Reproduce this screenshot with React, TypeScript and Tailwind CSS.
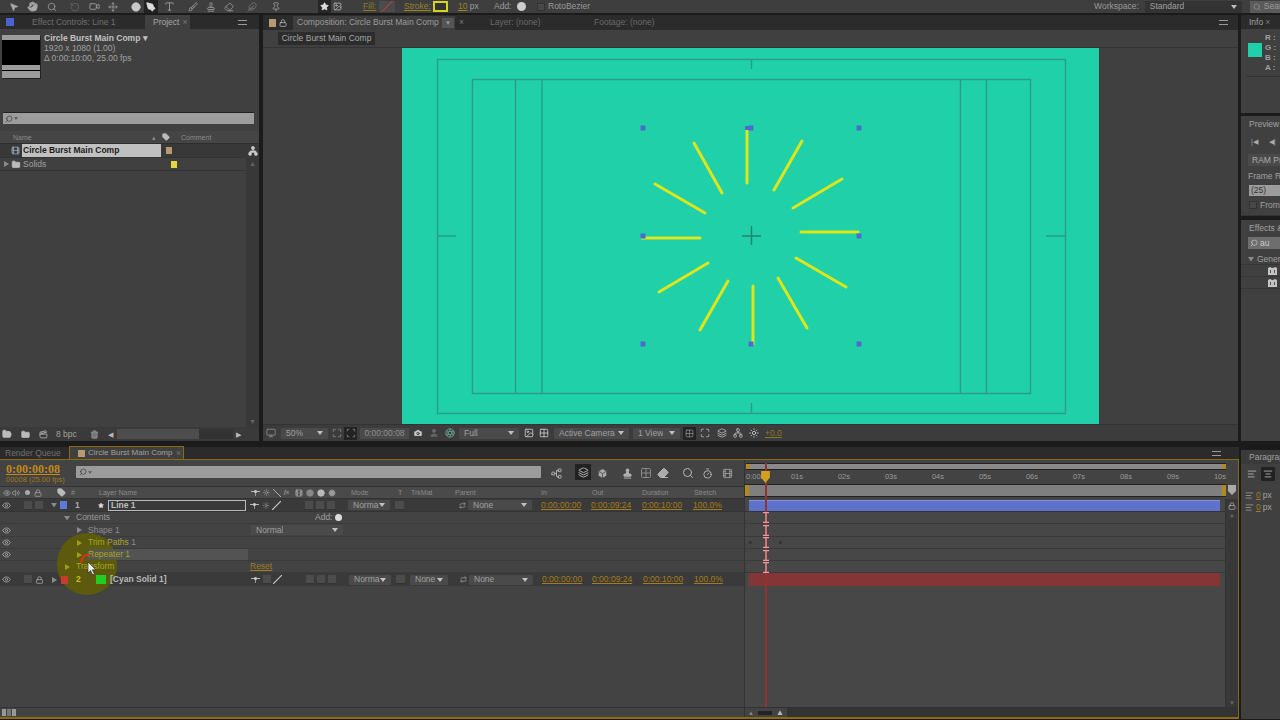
import {
  MousePointer2, Hand, Search, RotateCcw, Video, Move, Circle, PenTool, Type, Brush, Stamp, Eraser, Feather, Pin, Star,
  Image, Eye, Volume2, Lock, Tag, Sun, Folder, Trash2, Network, Camera, User, Grid2x2, Monitor, Layers,
  Box, Cog, Timer, Film, AlignLeft, AlignCenter, Clapperboard, FolderOpen, Maximize, Scan, Aperture, Repeat,
} from 'lucide-react';

const lines = [
  [747, 128, 747, 183], [802, 141, 774, 190], [842, 179, 793, 208], [858, 232, 801, 232],
  [846, 287, 796, 258], [807, 328, 778, 278], [753, 286, 753, 344], [700, 330, 728, 281],
  [659, 292, 708, 263], [642, 238, 700, 238], [655, 184, 705, 213], [694, 143, 722, 193],
];
const handles = [[643, 128], [751, 128], [859, 128], [643, 236], [859, 236], [643, 344], [751, 344], [859, 344]];
const ruler = ['01s', '02s', '03s', '04s', '05s', '06s', '07s', '08s', '09s', '10s'];

function Tri({ open, className = 'text-[#8a8a8a]' }: { open?: boolean; className?: string }) {
  return (
    <svg viewBox="0 0 6 6" className={`w-[6px] h-[6px] shrink-0 fill-current relative z-10 ${className}`}>
      {open ? <path d="M0 1h6L3 5.5z" /> : <path d="M1 0l5 3-5 3z" />}
    </svg>
  );
}

function EyeIcon() {
  return <Eye size={9} strokeWidth={2} className="shrink-0 text-[#b0b0b0]" />;
}

function Sq({ className = '' }: { className?: string }) {
  return <div className={`w-[8px] h-[9px] shrink-0 bg-[#4c4c4c] border-b border-[#333] ${className}`} />;
}

function Drop({ label, className = '' }: { label: string; className?: string }) {
  return (
    <div className={`h-[10px] shrink-0 flex items-center justify-between px-[5px] bg-[#4a4a4a] rounded-[1px] text-[#a0a0a0] ${className}`}>
      <span className="overflow-hidden whitespace-nowrap">{label}</span>
      <svg viewBox="0 0 6 4" className="w-[6px] h-[4px] shrink-0 fill-[#c0c0c0]"><path d="M0 0h6L3 4z" /></svg>
    </div>
  );
}

function Shy({ className = '' }: { className?: string }) {
  return (
    <svg viewBox="0 0 9 7" className={`w-[9px] h-[7px] shrink-0 ${className}`}>
      <path d="M0 2.5h9" stroke="#b8b8b8" strokeWidth="1" />
      <circle cx="4.5" cy="2.5" r="1.6" fill="#c8c8c8" />
      <path d="M4.5 4v3" stroke="#999" strokeWidth="1" />
    </svg>
  );
}

function Switches({ second }: { second?: boolean }) {
  return (
    <>
      <Shy className="ml-[4px]" />
      {second ? <Sq className="ml-[3px]" /> : <Sun size={7} className="ml-[3px] w-[8px] shrink-0 text-[#9a9a9a]" />}
      <svg viewBox="0 0 9 9" className="ml-[2px] w-[9px] h-[9px] shrink-0 stroke-[#c8c8c8]"><path d="M0 9L9 0" strokeWidth="1.2" /></svg>
      <Sq className="ml-[24px]" />
      <Sq className="ml-[3px]" />
      <Sq className="ml-[3px]" />
      <Drop label="Norma" className="ml-[13px] w-[42px]" />
      <Sq className="ml-[5px] w-[9px]" />
    </>
  );
}

function Times() {
  return (
    <>
      <Repeat size={7} className="ml-[12px] w-[7px] shrink-0 text-[#b0b0b0]" />
      <Drop label="None" className="ml-[2px] w-[64px]" />
      <span className="ml-[9px] w-[38px] shrink-0 underline text-[#a47c1c]">0:00:00:00</span>
      <span className="ml-[12px] w-[39px] shrink-0 underline text-[#a47c1c]">0:00:09:24</span>
      <span className="ml-[12px] w-[39px] shrink-0 underline text-[#a47c1c]">0:00:10:00</span>
      <span className="ml-[12px] w-[27px] shrink-0 underline text-[#a47c1c]">100.0%</span>
    </>
  );
}

function EffectGlyph() {
  return (
    <svg viewBox="0 0 9 8" className="w-[9px] h-[8px] fill-[#c4c4c4]">
      <path d="M0 1l2-1 2 1 1 0 2-1 2 1v7H0z" />
      <path d="M2 3h1v3H2zM6 3h1v3H6z" fill="#555" />
    </svg>
  );
}

export default function App() {
  return (
    <div className="relative w-[1280px] h-[720px] overflow-hidden flex flex-col bg-[#1b1b1b] text-[8.5px] leading-none text-[#a0a0a0] [font-family:'Liberation_Sans',sans-serif]">
      {/* Top toolbar, cut off by the capture */}
      <header className="h-[13px] shrink-0 flex items-center bg-[#3e3e3e] overflow-hidden text-[#9a9a9a]">
        <MousePointer2 size={10} className="ml-[9px] shrink-0 fill-[#aaa]" />
        <Hand size={11} className="ml-[8px] shrink-0 fill-[#aaa]" />
        <Search size={10} className="ml-[9px] shrink-0" />
        <RotateCcw size={10} className="ml-[13px] shrink-0 text-[#666]" />
        <Video size={11} className="ml-[9px] shrink-0" />
        <Move size={10} className="ml-[8px] shrink-0" />
        <Circle size={10} className="ml-[13px] shrink-0 fill-[#c8c8c8] text-[#c8c8c8]" />
        <div className="ml-[3px] w-[14px] h-[13px] bg-[#222] flex items-center justify-center shrink-0">
          <PenTool size={10} className="fill-[#ddd] text-[#ddd]" />
        </div>
        <Type size={11} className="ml-[6px] shrink-0" />
        <Brush size={10} className="ml-[13px] shrink-0" />
        <Stamp size={10} className="ml-[8px] shrink-0" />
        <Eraser size={10} className="ml-[8px] shrink-0" />
        <Feather size={10} className="ml-[13px] shrink-0 text-[#777]" />
        <Pin size={10} className="ml-[14px] shrink-0" />
        <div className="ml-[37px] w-[13px] h-[13px] bg-[#262626] flex items-center justify-center shrink-0">
          <Star size={9} className="fill-[#ddd] text-[#ddd]" />
        </div>
        <Image size={9} className="ml-[2px] shrink-0 text-[#bbb]" />
        <span className="ml-[21px] w-[16px] shrink-0 underline text-[#8f7a20]">Fill:</span>
        <div className="w-[16px] h-[11px] shrink-0 bg-[#4b4b4b] flex items-center justify-center">
          <div className="w-[16px] h-[1px] -rotate-45 bg-[#b04040]" />
        </div>
        <span className="ml-[9px] w-[29px] shrink-0 underline text-[#9a8420]">Stroke:</span>
        <div className="w-[15px] h-[11px] shrink-0 bg-[#333] border-2 border-[#d4d420]" />
        <span className="ml-[10px] w-[24px] shrink-0"><span className="underline text-[#9a8420]">10</span> px</span>
        <span className="ml-[12px] w-[22px] shrink-0">Add:</span>
        <span className="w-[9px] h-[9px] rounded-full bg-[#ccc] shrink-0 ml-[1px]" />
        <span className="ml-[11px] w-[8px] h-[8px] bg-[#484848] border border-[#333] shrink-0" />
        <span className="ml-[3px] shrink-0">RotoBezier</span>
        <span className="ml-[504px] shrink-0">Workspace:</span>
        <Drop label="Standard" className="ml-[6px] w-[97px] h-[12px] bg-[#333] rounded-none" />
        <div className="ml-[8px] flex-1 h-[12px] bg-[#5a5a5a] flex items-center gap-[3px] px-[3px]">
          <Search size={8} className="shrink-0" /><span>Search</span>
        </div>
      </header>

      <div className="mt-[2px] h-[426px] shrink-0 flex">
        {/* Project panel */}
        <section className="w-[259px] shrink-0 flex flex-col bg-[#404040]">
          <div className="h-[14px] shrink-0 flex items-center bg-[#2b2b2b]">
            <span className="ml-[6px] w-[8px] h-[8px] bg-[#4a63d0] shrink-0" />
            <span className="ml-[18px] w-[113px] text-[#6f6f6f] whitespace-nowrap">Effect Controls: Line 1</span>
            <span className="w-[45px] h-full flex items-center bg-[#404040] pl-[8px] text-[#a8a8a8] whitespace-nowrap">Project <span className="ml-[3px] text-[#777]">×</span></span>
            <span className="ml-[48px] w-[9px] h-[5px] border-y border-[#999]" />
          </div>
          <div className="h-[83px] shrink-0 flex items-start pt-[6px] pl-[2px]">
            <div className="w-[38px] h-[43px] shrink-0 flex flex-col shadow-[1px_1px_0_#222]">
              <div className="h-[5px] bg-[#9c9c9c]" />
              <div className="h-[25px] bg-black" />
              <div className="h-[5px] bg-[#9c9c9c]" />
              <div className="h-[1px] bg-black" />
              <div className="h-[7px] bg-[#9c9c9c]" />
            </div>
            <div className="ml-[4px] -mt-[1px] flex flex-col gap-[1px] text-[8.5px] leading-[9px]">
              <span className="text-[#c0c0c0] font-bold">Circle Burst Main Comp ▾</span>
              <span>1920 x 1080 (1.00)</span>
              <span>Δ 0:00:10:00, 25.00 fps</span>
            </div>
          </div>
          <div className="mx-[3px] mr-[5px] h-[12px] shrink-0 bg-[#9c9c9c] border-t border-[#222] flex items-center gap-[1px] px-[2px]">
            <Search size={8} className="text-[#333] -scale-x-100" />
            <svg viewBox="0 0 6 4" className="w-[4px] h-[3px] fill-[#555]"><path d="M0 0h6L3 4z" /></svg>
          </div>
          <div className="mt-[7px] h-[13px] shrink-0 flex items-center bg-[#454545] border-b border-[#2e2e2e] text-[7px] text-[#8a8a8a]">
            <span className="ml-[13px] w-[139px]">Name</span>
            <span className="w-[8px] text-[#888]">▴</span>
            <Tag size={8} className="ml-[1px] w-[10px] fill-[#bbb] text-[#bbb]" />
            <span className="ml-[10px]">Comment</span>
          </div>
          <div className="flex-1 flex min-h-0">
            <div className="w-[246px] shrink-0 flex flex-col">
              <div className="h-[14px] flex items-center bg-[#383838] border-b border-[#333]">
                <Film size={9} className="ml-[11px] w-[9px] shrink-0 text-[#9ab]" />
                <span className="ml-[2px] w-[139px] h-[13px] flex items-center pl-[1px] bg-[#c0c0c0] text-[#1c1c1c] font-bold">Circle Burst Main Comp</span>
                <span className="ml-[5px] w-[6px] h-[7px] bg-[#b89a70]" />
              </div>
              <div className="h-[13px] flex items-center border-b border-[#333]">
                <span className="ml-[3px]"><Tri /></span>
                <Folder size={9} className="ml-[2px] w-[10px] fill-[#bbb] text-[#bbb]" />
                <span className="ml-[2px] w-[143px]">Solids</span>
                <span className="ml-[5px] w-[6px] h-[7px] bg-[#e6d83c]" />
              </div>
            </div>
            <div className="flex-1 flex flex-col items-center bg-[#383838]">
              <Network size={10} className="mt-[2px] fill-[#ccc] text-[#ccc]" />
              <span className="mt-[4px] text-[7px] text-[#666]">▲</span>
              <span className="mt-auto mb-[2px] text-[7px] text-[#666]">▼</span>
            </div>
          </div>
          <div className="h-[14px] shrink-0 flex items-center bg-[#3a3a3a]">
            <FolderOpen size={10} className="ml-[2px] shrink-0 text-[#bbb] fill-[#bbb]" />
            <Folder size={9} className="ml-[9px] shrink-0 text-[#bbb] fill-[#bbb]" />
            <Clapperboard size={9} className="ml-[9px] shrink-0 text-[#bbb]" />
            <span className="ml-[8px] w-[24px] shrink-0">8 bpc</span>
            <Trash2 size={9} className="ml-[10px] shrink-0 text-[#999] fill-[#777]" />
            <span className="ml-[9px] text-[#bbb] text-[7px]">◀</span>
            <span className="ml-[4px] w-[82px] h-[10px] bg-[#4d4d4d] shrink-0" />
            <span className="w-[34px] h-[10px] bg-[#333] shrink-0" />
            <span className="ml-[3px] text-[#bbb] text-[7px]">▶</span>
          </div>
        </section>

        {/* Composition panel */}
        <main className="ml-[4px] w-[975px] shrink-0 flex flex-col bg-[#404040]">
          <div className="h-[15px] shrink-0 flex items-center bg-[#2b2b2b]">
            <span className="ml-[6px] w-[7px] h-[8px] bg-[#b89a70] shrink-0" />
            <Lock size={8} className="ml-[3px] shrink-0 text-[#ccc]" />
            <div className="ml-[6px] w-[162px] h-[14px] shrink-0 flex items-center justify-between pl-[4px] pr-[1px] bg-[#3e3e3e] text-[#9c9c9c] whitespace-nowrap">
              Composition: Circle Burst Main Comp
              <span className="w-[12px] h-[10px] flex items-center justify-center bg-[#555] text-[6px]">▼</span>
            </div>
            <span className="ml-[4px] w-[18px] text-[#777]">×</span>
            <span className="ml-[13px] w-[104px] text-[#6a6a6a]">Layer: (none)</span>
            <span className="w-[350px] text-[#6a6a6a]">Footage: (none)</span>
            <span className="ml-[275px] w-[9px] h-[5px] border-y border-[#999]" />
          </div>
          <div className="h-[18px] shrink-0 flex items-center border-b border-[#333] pl-[15px]">
            <span className="w-[97px] h-[13px] flex items-center justify-center bg-[#2c2c2c] text-[#a8a8a8]">Circle Burst Main Comp</span>
          </div>
          <div className="h-[376px] shrink-0 pl-[139px]">
            <div className="w-[697px] h-[376px] bg-[#1fd0a9]">
              <svg viewBox="402 48 697 376" className="w-[697px] h-[376px] block">
                <g fill="none" stroke="#2d9c86" strokeWidth="1.4">
                  <rect x="437.5" y="59.5" width="628" height="354" />
                  <rect x="472.5" y="79.5" width="558" height="314" />
                  <path d="M515.5 79v314M542 79v314M960.5 79v314M986.5 79v314M751.5 59v10M751.5 403v10M437 236h19M1046 236h19" />
                  <path d="M751.5 226v19M742 236h19" stroke="#27806e" />
                </g>
                {lines.map((l, i) => (
                  <line key={i} x1={l[0]} y1={l[1]} x2={l[2]} y2={l[3]} stroke="#dce61a" strokeWidth="3" strokeLinecap="round" />
                ))}
                {handles.map((h, i) => (
                  <rect key={i} x={h[0] - 2.5} y={h[1] - 2.5} width="5" height="5" fill="#4f6bcf" />
                ))}
                <rect x="745" y="126" width="4" height="4" fill="#4f6bcf" />
              </svg>
            </div>
          </div>
          <div className="h-[17px] shrink-0 flex items-center border-t border-[#333] bg-[#3c3c3c] text-[#8f8f8f]">
            <Monitor size={10} className="ml-[3px] shrink-0" />
            <Drop label="50%" className="ml-[5px] w-[47px] h-[11px]" />
            <Maximize size={10} className="ml-[4px] shrink-0" />
            <div className="ml-[2px] w-[13px] h-[13px] bg-[#222] flex items-center justify-center shrink-0"><Scan size={10} /></div>
            <span className="ml-[3px] w-[49px] h-[11px] flex items-center justify-center bg-[#4a4a4a] shrink-0">0:00:00:08</span>
            <Camera size={10} className="ml-[4px] shrink-0 fill-[#ccc] text-[#333]" />
            <User size={10} className="ml-[6px] shrink-0 text-[#666] fill-[#666]" />
            <Aperture size={10} className="ml-[6px] shrink-0 text-[#6a9]" />
            <Drop label="Full" className="ml-[4px] w-[60px] h-[11px]" />
            <Image size={10} className="ml-[5px] shrink-0 text-[#ccc]" />
            <Grid2x2 size={10} className="ml-[5px] shrink-0 text-[#ccc]" />
            <Drop label="Active Camera" className="ml-[5px] w-[75px] h-[11px]" />
            <Drop label="1 View" className="ml-[4px] w-[47px] h-[11px]" />
            <div className="ml-[3px] w-[13px] h-[13px] bg-[#222] flex items-center justify-center shrink-0"><Grid2x2 size={9} /></div>
            <Maximize size={10} className="ml-[4px] shrink-0 text-[#bbb]" />
            <Layers size={10} className="ml-[7px] shrink-0 text-[#bbb]" />
            <Network size={10} className="ml-[6px] shrink-0 text-[#bbb]" />
            <Sun size={10} className="ml-[6px] shrink-0 text-[#ccc]" />
            <span className="ml-[6px] underline text-[#8f7a20]">+0.0</span>
          </div>
        </main>

        {/* Right column */}
        <aside className="ml-[3px] flex-1 flex flex-col">
          <div className="h-[98px] shrink-0 flex flex-col bg-[#404040]">
            <div className="h-[14px] shrink-0 flex items-center pl-[8px] bg-[#2b2b2b] text-[#a0a0a0]">Info <span className="ml-[2px] text-[#777]">×</span></div>
            <div className="flex items-start pl-[7px] mt-[4px]">
              <span className="mt-[10px] w-[14px] h-[14px] bg-[#1fd0a9] shrink-0" />
              <div className="ml-[3px] flex flex-col leading-[10px] font-bold text-[8px]">
                <span>R :</span><span>G :</span><span>B :</span><span>A :</span>
              </div>
            </div>
            <div className="mt-[3px] ml-[5px] h-px bg-[#333]" />
          </div>
          <div className="mt-[3px] h-[100px] shrink-0 flex flex-col bg-[#404040] border-b border-[#333] overflow-hidden whitespace-nowrap">
            <div className="h-[16px] shrink-0 flex items-center pl-[8px]">Preview</div>
            <div className="mt-[6px] h-[7px] flex items-center pl-[10px] gap-[11px] text-[7px] text-[#aaa]"><span>|◀</span><span>◀|</span></div>
            <div className="mt-[9px] ml-[7px] h-[12px] shrink-0 bg-[#4a4a4a] flex items-center pl-[4px] text-[#aaa]">RAM Preview</div>
            <div className="mt-[6px] ml-[7px]">Frame Rate</div>
            <div className="mt-[4px] ml-[8px] h-[11px] w-[32px] shrink-0 bg-[#9c9c9c] text-[#333] flex items-center pl-[2px]">(25)</div>
            <div className="mt-[5px] ml-[8px] flex items-center gap-[3px]"><span className="w-[8px] h-[8px] border border-[#333] bg-[#484848]" />From</div>
          </div>
          <div className="mt-[4px] flex-1 flex flex-col bg-[#404040] overflow-hidden whitespace-nowrap">
            <div className="h-[17px] shrink-0 flex items-center pl-[8px]">Effects &amp;</div>
            <div className="ml-[7px] h-[12px] shrink-0 bg-[#6e6e6e] flex items-center gap-[2px] pl-[2px] text-[#ccc]">
              <Search size={8} className="shrink-0 -scale-x-100" /><span>au</span>
            </div>
            <div className="mt-[5px] h-[11px] shrink-0 flex items-center gap-[3px] pl-[7px] border-b border-[#353535]"><Tri open />General</div>
            <div className="h-[12px] shrink-0 flex items-center pl-[27px] border-b border-[#353535]"><EffectGlyph /></div>
            <div className="h-[12px] shrink-0 flex items-center pl-[27px] border-b border-[#353535]"><EffectGlyph /></div>
          </div>
        </aside>
      </div>

      {/* Timeline */}
      <div className="mt-[6px] h-[272px] shrink-0 flex">
        <section className="w-[1239px] shrink-0 flex flex-col">
          <div className="h-[13px] shrink-0 flex items-end bg-[#2b2b2b] border-b border-[#8a6a14]">
            <span className="ml-[5px] w-[64px] h-[12px] flex items-center text-[#6f6f6f]">Render Queue</span>
            <div className="w-[115px] h-[13px] flex items-center bg-[#404040] border border-b-0 border-[#8a6a14] rounded-t-[1px] pl-[8px] whitespace-nowrap">
              <span className="w-[7px] h-[7px] bg-[#b89a70] shrink-0" />
              <span className="ml-[3px] w-[87px] shrink-0 text-[8px] text-[#a0a0a0]">Circle Burst Main Comp</span>
              <span className="ml-[1px] text-[#777]">×</span>
            </div>
            <span className="ml-[1028px] mb-[3px] w-[9px] h-[5px] border-y border-[#999]" />
          </div>
          <div className="flex-1 min-h-0 flex border-r border-b-2 border-[#8a6a14] bg-[#434343]">
            {/* Layer outline */}
            <div className="relative w-[745px] shrink-0 flex flex-col border-r border-[#333]">
              <div className="h-[26px] shrink-0 flex items-start">
                <div className="ml-[6px] w-[70px] shrink-0 pt-[4px] flex flex-col">
                  <span className="text-[12px] font-bold text-[#c08a1a] underline leading-[11px] [font-family:'Liberation_Serif',serif]">0:00:00:08</span>
                  <span className="mt-[1px] text-[7.5px] text-[#a07818]">00008 (25.00 fps)</span>
                </div>
                <div className="mt-[6px] w-[465px] h-[12px] bg-[#9c9c9c] rounded-[1px] flex items-center gap-[1px] px-[3px]">
                  <Search size={8} className="text-[#333] -scale-x-100" />
                  <svg viewBox="0 0 6 4" className="w-[4px] h-[3px] fill-[#555]"><path d="M0 0h6L3 4z" /></svg>
                </div>
                <div className="mt-[6px] flex items-center text-[#b8b8b8]">
                  <Network size={11} className="ml-[10px] shrink-0 -rotate-90" />
                  <div className="ml-[13px] w-[16px] h-[16px] -mt-[2px] bg-[#222] flex items-center justify-center shrink-0"><Layers size={11} /></div>
                  <Box size={11} className="ml-[6px] shrink-0 fill-[#aaa] text-[#555]" />
                  <Stamp size={11} className="ml-[14px] shrink-0 fill-[#aaa]" />
                  <Grid2x2 size={12} className="ml-[7px] shrink-0 text-[#888]" />
                  <Eraser size={12} className="ml-[5px] shrink-0 fill-[#aaa]" />
                  <Search size={12} className="ml-[13px] shrink-0" />
                  <Timer size={11} className="ml-[8px] shrink-0" />
                  <Film size={11} className="ml-[9px] shrink-0 text-[#999]" />
                </div>
              </div>
              {/* Column headers */}
              <div className="h-[13px] shrink-0 flex items-center bg-[#4a4a4a] border-y border-[#333] text-[7px] text-[#8a8a8a]">
                <Eye size={8} className="ml-[3px] shrink-0 text-[#aaa]" />
                <Volume2 size={8} className="ml-[1px] shrink-0 text-[#aaa]" />
                <span className="ml-[5px] w-[5px] h-[5px] rounded-full bg-[#aaa] shrink-0" />
                <Lock size={8} className="ml-[4px] shrink-0 text-[#aaa]" />
                <Tag size={9} className="ml-[15px] shrink-0 fill-[#bbb] text-[#bbb]" />
                <span className="ml-[5px] w-[5px] shrink-0">#</span>
                <span className="ml-[23px] w-[152px] shrink-0">Layer Name</span>
                <Shy />
                <Sun size={7} className="ml-[3px] shrink-0 text-[#aaa]" />
                <svg viewBox="0 0 8 8" className="ml-[3px] w-[8px] h-[8px] stroke-[#aaa] shrink-0"><path d="M0 0l8 8" /></svg>
                <span className="ml-[3px] italic text-[#aaa] shrink-0 w-[9px] [font-family:'Liberation_Serif',serif]">fx</span>
                <Film size={8} className="ml-[2px] shrink-0 text-[#aaa]" />
                <Circle size={8} className="ml-[3px] shrink-0 fill-[#888] text-[#888]" />
                <Circle size={8} className="ml-[3px] shrink-0 fill-[#bbb] text-[#bbb]" />
                <Cog size={8} className="ml-[3px] shrink-0 fill-[#999] text-[#999]" />
                <span className="ml-[15px] w-[47px] shrink-0">Mode</span>
                <span className="w-[13px] shrink-0">T</span>
                <span className="w-[44px] shrink-0">TrkMat</span>
                <span className="w-[86px] shrink-0">Parent</span>
                <span className="w-[51px] shrink-0">In</span>
                <span className="w-[50px] shrink-0">Out</span>
                <span className="w-[52px] shrink-0">Duration</span>
                <span className="shrink-0">Stretch</span>
              </div>
              {/* Line 1 */}
              <div className="h-[13px] shrink-0 flex items-center bg-[#3a3a3a] border-b border-[#343434]">
                <span className="ml-[2px]"><EyeIcon /></span>
                <Sq className="ml-[13px]" />
                <Sq className="ml-[3px]" />
                <span className="ml-[8px]"><Tri open /></span>
                <span className="ml-[3px] w-[7px] h-[8px] bg-[#5e79d8] shrink-0" />
                <span className="ml-[8px] w-[5px] shrink-0 font-bold text-[#aaa]">1</span>
                <Star size={7} className="ml-[18px] w-[6px] shrink-0 fill-[#ddd] text-[#ddd]" />
                <span className="ml-[4px] w-[138px] h-[11px] shrink-0 flex items-center pl-[2px] border border-[#b8b8b8] font-bold text-[#bdbdbd]">Line 1</span>
                <Switches />
                <span className="ml-[43px] w-0" />
                <Times />
              </div>
              {/* Contents */}
              <div className="h-[12px] shrink-0 flex items-center border-b border-[#3a3a3a]">
                <span className="ml-[64px]"><Tri open /></span>
                <span className="ml-[6px] w-[239px] shrink-0 text-[#9a9a9a]">Contents</span>
                <span className="text-[#a0a0a0] w-[20px]">Add:</span>
                <span className="w-[7px] h-[7px] rounded-full bg-[#ddd]" />
              </div>
              {/* Shape 1 */}
              <div className="h-[13px] shrink-0 flex items-center border-b border-[#3a3a3a]">
                <span className="ml-[2px]"><EyeIcon /></span>
                <span className="ml-[65px]"><Tri /></span>
                <span className="ml-[6px] w-[163px] shrink-0 relative z-10 text-[#8d8d8d]">Shape 1</span>
                <Drop label="Normal" className="w-[92px]" />
              </div>
              {/* Trim Paths 1 */}
              <div className="h-[12px] shrink-0 flex items-center border-b border-[#3a3a3a]">
                <span className="ml-[2px]"><EyeIcon /></span>
                <span className="ml-[65px]"><Tri className="text-[#a09c20]" /></span>
                <span className="ml-[6px] relative z-10 text-[#a8a428]">Trim Paths <span className="text-[#8d8d8d]">1</span></span>
              </div>
              {/* Repeater 1 */}
              <div className="h-[12px] shrink-0 flex items-center border-b border-[#3a3a3a]">
                <span className="ml-[2px]"><EyeIcon /></span>
                <span className="ml-[65px]"><Tri className="text-[#a09c20]" /></span>
                <span className="ml-[5px] w-[161px] h-[11px] flex items-center relative z-10 bg-[#585858]/80 pl-[1px] text-[#a8a428]">Repeater 1</span>
              </div>
              {/* Transform */}
              <div className="h-[12px] shrink-0 flex items-center border-b border-[#3a3a3a]">
                <span className="ml-[64px]"><Tri className="text-[#a09c20]" /></span>
                <span className="ml-[6px] w-[174px] shrink-0 relative z-10 text-[#a8a428]">Transform</span>
                <span className="underline text-[#a47c1c]">Reset</span>
              </div>
              {/* Cyan Solid 1 */}
              <div className="h-[13px] shrink-0 flex items-center bg-[#3a3a3a]">
                <span className="ml-[2px]"><EyeIcon /></span>
                <span className="ml-[13px] w-[8px]"><Sq /></span>
                <Lock size={8} className="ml-[3px] w-[9px] shrink-0 text-[#bbb]" />
                <span className="ml-[7px]"><Tri /></span>
                <span className="ml-[4px] w-[7px] h-[8px] bg-[#c83c30] shrink-0 relative z-10" />
                <span className="ml-[8px] w-[5px] shrink-0 font-bold text-[#c8c020] relative z-10">2</span>
                <span className="ml-[15px] w-[10px] h-[9px] bg-[#22cc22] shrink-0 relative z-10" />
                <span className="ml-[4px] w-[137px] shrink-0 font-bold text-[#b8b8b8] relative z-10">[Cyan Solid 1]</span>
                <Switches second />
                <Drop label="None" className="ml-[5px] w-[38px]" />
                <Times />
              </div>
              <div className="flex-1" />
              <div className="h-[10px] shrink-0 flex items-center gap-[1px] pl-[2px] border-t border-[#333]">
                <span className="w-[4px] h-[7px] bg-[#999]" />
                <span className="w-[4px] h-[7px] bg-[#777]" />
                <span className="w-[4px] h-[7px] bg-[#999]" />
              </div>

              {/* Pen cursor click indicator */}
              <div className="absolute left-[57px] top-[73px] w-[60px] h-[62px] rounded-full bg-[#5c5a0c]" />
              <svg viewBox="0 0 20 28" className="absolute left-[78px] top-[90px] w-[20px] h-[28px] z-20">
                <path d="M3.5 13A6.5 6.5 0 0 1 12 5.5" fill="none" stroke="#d8321c" strokeWidth="2" />
                <path d="M10 12v11l2.5-2.5 2.2 4.5 1.8-.9-2.2-4.3h3.5z" fill="#eee" stroke="#222" strokeWidth=".6" />
              </svg>
            </div>

            {/* Time graph */}
            <div className="relative flex-1 flex flex-col min-w-0">
              <div className="h-[3px] shrink-0" />
              <div className="mx-[1px] mr-[12px] h-[7px] shrink-0 flex justify-between bg-[#8a8a8a] border-y border-[#222]">
                <span className="w-[4px] bg-[#b08a20]" />
                <span className="w-[4px] bg-[#b08a20]" />
              </div>
              <div className="relative h-[14px] shrink-0 mr-[12px] text-[7.5px] text-[#9a9a9a]">
                <span className="absolute left-[1px] top-[3px]">0:00s</span>
                {ruler.map((r, i) => (
                  <span key={r} className="absolute top-[3px] w-[16px] text-center" style={{ left: 44 + i * 47 }}>{r}</span>
                ))}
              </div>
              <div className="mr-[12px] h-[13px] shrink-0 flex justify-between bg-[#7f7f7f] border-y border-[#222]">
                <span className="w-[4px] bg-[#b08a20]" />
                <span className="w-[4px] bg-[#b08a20]" />
              </div>
              <div className="h-[2px] shrink-0" />
              <div className="flex-1 min-h-0 flex">
                <div className="flex-1 flex flex-col bg-[#474747]">
                  <div className="h-[13px] shrink-0 pl-[4px] pr-[5px] border-b border-[#343434]">
                    <div className="h-[11px] mt-[1px] bg-[#5d72c8] border-t border-[#7f92dc]" />
                  </div>
                  <div className="h-[12px] shrink-0 border-b border-[#3a3a3a]" />
                  <div className="h-[13px] shrink-0 border-b border-[#3a3a3a]" />
                  <div className="h-[12px] shrink-0 border-b border-[#3a3a3a]" />
                  <div className="h-[12px] shrink-0 border-b border-[#3a3a3a]" />
                  <div className="h-[12px] shrink-0 border-b border-[#3a3a3a]" />
                  <div className="h-[13px] shrink-0 pl-[4px] pr-[5px]"><div className="h-[13px] bg-[#843535]" /></div>
                  <div className="flex-1" />
                </div>
                <div className="w-[13px] shrink-0 flex flex-col items-center bg-[#383838] border-l border-[#333] text-[6px] text-[#666]">
                  <Lock size={8} className="mt-[3px] text-[#bbb]" />
                  <span className="mt-[2px]">▲</span>
                  <span className="mt-auto mb-[1px]">▼</span>
                </div>
              </div>
              <div className="h-[10px] shrink-0 flex items-center border-t border-[#333]">
                <span className="ml-[3px] text-[6px] text-[#888]">▲</span>
                <span className="ml-[4px] w-[14px] h-[4px] bg-[#222]" />
                <span className="ml-[4px] text-[8px] text-[#bbb]">▲</span>
                <span className="ml-[3px] flex-1 h-[9px] bg-[#333]" />
              </div>

              {/* Playhead */}
              <div className="absolute left-[20px] top-[3px] bottom-[10px] w-[2px] bg-[#8f3434]" />
              <svg viewBox="0 0 8 11" className="absolute left-[16px] top-[11px] w-[9px] h-[12px] fill-[#d4a020]"><path d="M0 0h8v6l-4 5-4-5z" /></svg>
              {[52, 65, 77, 90, 102].map((t) => (
                <svg key={t} viewBox="0 0 6 11" className="absolute left-[18px] w-[6px] h-[11px] stroke-[#eb9a9a] fill-none" style={{ top: t }}>
                  <path d="M0 .5h6M0 10.5h6M3 0v11" strokeWidth="1.3" />
                </svg>
              ))}
              <span className="absolute left-[4px] top-[81px] w-[3px] h-[3px] rounded-full bg-[#333]" />
              <span className="absolute left-[34px] top-[81px] w-[3px] h-[3px] rounded-full bg-[#333]" />
              <svg viewBox="0 0 8 10" className="absolute left-[483px] top-[25px] w-[8px] h-[10px] fill-[#aaa]"><path d="M0 0h8v6l-4 4-4-4z" /></svg>
            </div>
          </div>
        </section>
        {/* Paragraph panel */}
        <aside className="ml-[2px] flex-1 flex flex-col pt-[3px] overflow-hidden whitespace-nowrap">
          <div className="flex-1 flex flex-col bg-[#404040]">
            <div className="h-[14px] shrink-0 flex items-center pl-[8px] bg-[#3a3a3a]">Paragraph</div>
            <div className="mt-[3px] flex items-center pl-[6px] gap-[4px] text-[#bbb]">
              <AlignLeft size={10} className="shrink-0" />
              <div className="w-[14px] h-[14px] bg-[#222] flex items-center justify-center shrink-0"><AlignCenter size={10} /></div>
            </div>
            <div className="mt-[10px] pl-[4px] flex items-center gap-[2px]"><AlignLeft size={9} className="shrink-0" /><span className="underline text-[#a47c1c]">0</span> px</div>
            <div className="mt-[3px] pl-[4px] flex items-center gap-[2px]"><AlignLeft size={9} className="shrink-0" /><span className="underline text-[#a47c1c]">0</span> px</div>
          </div>
        </aside>
      </div>
    </div>
  );
}
